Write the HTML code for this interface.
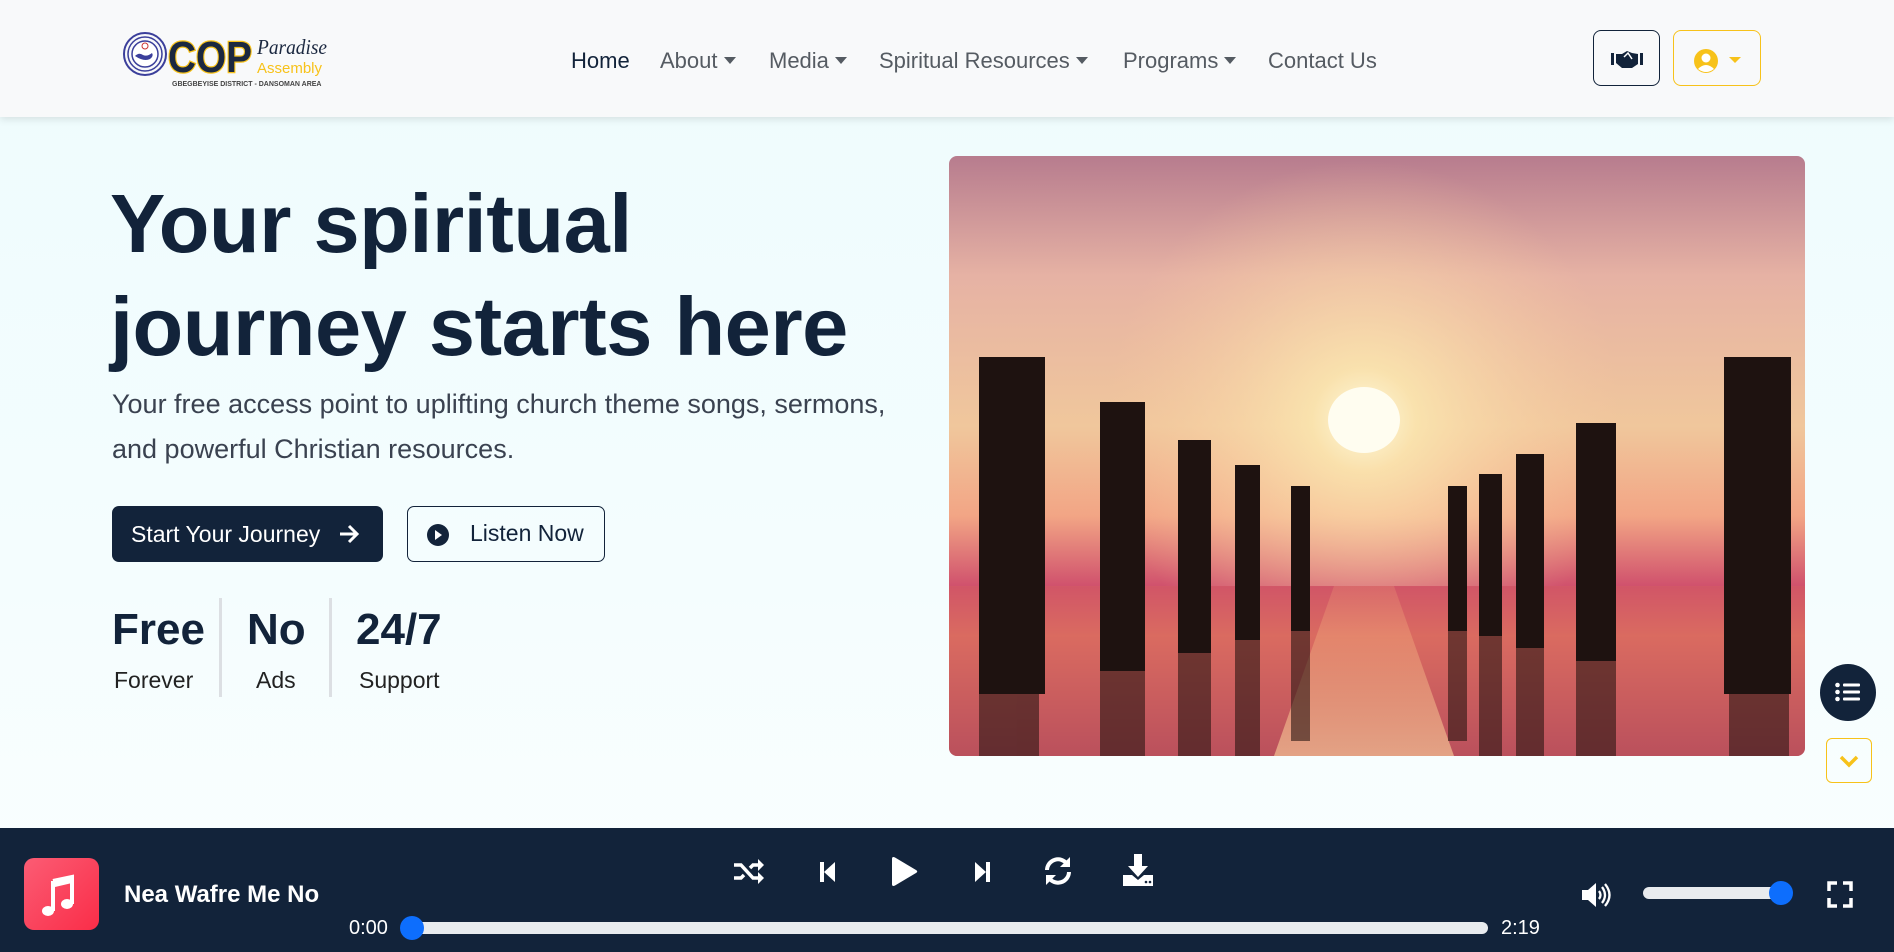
<!DOCTYPE html>
<html><head><meta charset="utf-8"><style>
*{margin:0;padding:0;box-sizing:border-box}
body{width:1894px;height:952px;overflow:hidden;font-family:"Liberation Sans",sans-serif;background:linear-gradient(180deg,#eefcfd 0%,#f4fdfe 60%,#fbfeff 100%);position:relative;color:#12233a}
.nav{position:absolute;left:0;top:0;width:1894px;height:117px;background:#f8f9fa;box-shadow:0 2px 8px rgba(0,0,0,.12);z-index:2}
.nav a{position:absolute;top:48px;font-size:22px;color:#555b62;text-decoration:none;white-space:nowrap}
.caret{display:inline-block;width:0;height:0;border-left:6px solid transparent;border-right:6px solid transparent;border-top:7px solid #555b62;vertical-align:4px;margin-left:6px}
.abs{position:absolute}
h1{position:absolute;left:110px;top:172px;font-size:83px;line-height:103px;font-weight:bold;color:#12233a;letter-spacing:-0.5px}
.lead{position:absolute;left:112px;top:382px;font-size:27px;line-height:45px;color:#3a4250;width:810px}
.btn1{position:absolute;left:112px;top:506px;width:271px;height:56px;background:#12233a;border-radius:7px;color:#fff;font-size:23px;line-height:56px;padding-left:19px}
.btn2{position:absolute;left:407px;top:506px;width:198px;height:56px;border:1.5px solid #12233a;border-radius:7px;color:#12233a;font-size:23px;line-height:53px;padding-left:62px}
.stat b{position:absolute;top:605px;font-size:44px;font-weight:bold;color:#12233a}
.stat span{position:absolute;top:667px;font-size:23px;color:#222}
.div{position:absolute;top:598px;width:3px;height:99px;background:#dcdfe3}
.player{position:absolute;left:0;top:828px;width:1894px;height:124px;background:#12233a}
.w{color:#fff}
</style></head><body>
<div class="nav">
  <svg class="abs" style="left:123px;top:30px" width="220" height="60" viewBox="0 0 220 60">
    <circle cx="22" cy="24" r="21" fill="none" stroke="#3b3f9b" stroke-width="2"/>
    <circle cx="22" cy="24" r="17" fill="none" stroke="#3b3f9b" stroke-width="1.5"/>
    <circle cx="22" cy="24" r="13" fill="#fff" stroke="#3b3f9b" stroke-width="1.5"/>
    <path d="M12 26 q4-4 8 -1 q4 2 9-2 q2 3 -2 6 q-6 3-15-3z" fill="#3b3f9b"/>
    <circle cx="22" cy="16" r="3" fill="none" stroke="#c33" stroke-width="1"/>
    <text x="45" y="42" font-family="Liberation Sans" font-weight="bold" font-size="44" fill="#1b2840" stroke="#f7c21a" stroke-width="2.5" paint-order="stroke" textLength="84" lengthAdjust="spacingAndGlyphs">COP</text>
    <text x="134" y="24" font-family="Liberation Serif" font-style="italic" font-size="21" fill="#1b2840" textLength="70" lengthAdjust="spacingAndGlyphs">Paradise</text>
    <text x="134" y="43" font-family="Liberation Sans" font-size="15" fill="#f7c21a">Assembly</text>
    <text x="49" y="56" font-family="Liberation Sans" font-weight="bold" font-size="7" fill="#444">GBEGBEYISE DISTRICT - DANSOMAN AREA</text>
  </svg>
  <a style="left:571px;color:#12233a">Home</a>
  <a style="left:660px">About<i class="caret"></i></a>
  <a style="left:769px">Media<i class="caret"></i></a>
  <a style="left:879px">Spiritual Resources<i class="caret"></i></a>
  <a style="left:1123px">Programs<i class="caret"></i></a>
  <a style="left:1268px">Contact Us</a>
  <div class="abs" style="left:1593px;top:30px;width:67px;height:56px;border:1.5px solid #12233a;border-radius:8px"></div>
  <svg class="abs" style="left:1611px;top:49px" width="32" height="20" viewBox="0 0 32 20"><rect x="0" y="4" width="3" height="12" fill="#12233a"/><rect x="29" y="4" width="3" height="12" fill="#12233a"/><path d="M5 5h6l5-3 5 2 6 1v10l-6 4h-10l-6-5z" fill="#12233a"/><path d="M13 8l4-4 4 6" stroke="#fff" stroke-width="1.5" fill="none"/></svg>
  <div class="abs" style="left:1673px;top:30px;width:88px;height:56px;border:1.5px solid #f7c21a;border-radius:8px"></div>
  <svg class="abs" style="left:1694px;top:48px" width="50" height="26" viewBox="0 0 50 26"><circle cx="12" cy="13" r="12" fill="#f7c21a"/><circle cx="12" cy="10" r="4.5" fill="#fff"/><path d="M4 21q8-8 16 0q-8 6-16 0z" fill="#fff"/><path d="M35 9h12l-6 6z" fill="#f7c21a"/></svg>
</div>

<h1>Your spiritual<br>journey starts here</h1>
<div class="lead">Your free access point to uplifting church theme songs, sermons, and powerful Christian resources.</div>
<div class="btn1">Start Your Journey<svg class="abs" style="left:226px;top:18px" width="22" height="20" viewBox="0 0 22 20"><path d="M2 10h17M11 2l8 8-8 8" stroke="#fff" stroke-width="3" fill="none"/></svg></div>
<div class="btn2"><svg class="abs" style="left:18px;top:16px" width="24" height="24" viewBox="0 0 24 24"><circle cx="12" cy="12" r="11" fill="#12233a"/><path d="M9 7l7 5-7 5z" fill="#fff"/></svg>Listen Now</div>
<div class="stat"><b style="left:112px">Free</b><span style="left:114px">Forever</span><b style="left:247px">No</b><span style="left:256px">Ads</span><b style="left:356px">24/7</b><span style="left:359px">Support</span></div>
<div class="div" style="left:219px"></div><div class="div" style="left:329px"></div>

<svg class="abs" style="left:949px;top:156px;border-radius:8px" width="856" height="600" viewBox="0 0 856 600" preserveAspectRatio="none">
  <defs>
    <linearGradient id="sky" x1="0" y1="0" x2="0" y2="1"><stop offset="0" stop-color="#b77c8e"/><stop offset=".2" stop-color="#e6b2a4"/><stop offset=".45" stop-color="#f0c79c"/><stop offset=".6" stop-color="#f2a585"/><stop offset=".72" stop-color="#cf4f6c"/><stop offset=".8" stop-color="#e0785f"/><stop offset="1" stop-color="#a14357"/></linearGradient>
    <radialGradient id="sun" cx="415" cy="264" r="260" gradientUnits="userSpaceOnUse"><stop offset="0" stop-color="#fffbe0"/><stop offset=".2" stop-color="#fbe7b0" stop-opacity=".85"/><stop offset="1" stop-color="#f8c8a0" stop-opacity="0"/></radialGradient>
    <linearGradient id="refl" x1="0" y1="0" x2="0" y2="1"><stop offset="0" stop-color="#f6b27a" stop-opacity=".2"/><stop offset="1" stop-color="#ffd9a0" stop-opacity=".6"/></linearGradient>
  </defs>
  <rect width="856" height="600" fill="url(#sky)"/>
  <rect width="856" height="430" fill="url(#sun)"/>
  <ellipse cx="415" cy="264" rx="36" ry="33" fill="#fffdf0"/>
  <rect x="0" y="430" width="856" height="170" fill="#d45e62" opacity=".5"/>
  <path d="M385 430h60l60 170h-180z" fill="url(#refl)"/>
  <g fill="#1e1210">
    <rect x="30" y="201" width="66" height="337"/>
    <rect x="151" y="246" width="45" height="269"/>
    <rect x="229" y="284" width="33" height="213"/>
    <rect x="286" y="309" width="25" height="175"/>
    <rect x="342" y="330" width="19" height="145"/>
    <rect x="499" y="330" width="19" height="145"/>
    <rect x="530" y="318" width="23" height="162"/>
    <rect x="567" y="298" width="28" height="194"/>
    <rect x="627" y="267" width="40" height="238"/>
    <rect x="775" y="201" width="67" height="337"/>
  </g>
  <g fill="#2a1512" opacity=".6">
    <rect x="30" y="538" width="60" height="62"/><rect x="151" y="515" width="45" height="85"/><rect x="229" y="497" width="33" height="103"/><rect x="286" y="484" width="25" height="116"/><rect x="342" y="475" width="19" height="110"/><rect x="499" y="475" width="19" height="110"/><rect x="530" y="480" width="23" height="120"/><rect x="567" y="492" width="28" height="108"/><rect x="627" y="505" width="40" height="95"/><rect x="780" y="538" width="60" height="62"/>
  </g>
</svg>

<div class="abs" style="left:1820px;top:664px;width:56px;height:57px;border-radius:50%;background:#12233a"></div>
<svg class="abs" style="left:1835px;top:682px" width="26" height="20" viewBox="0 0 26 20"><g fill="#fff"><circle cx="2.5" cy="3" r="2.3"/><circle cx="2.5" cy="10" r="2.3"/><circle cx="2.5" cy="17" r="2.3"/><rect x="8" y="1.5" width="17" height="3" rx="1"/><rect x="8" y="8.5" width="17" height="3" rx="1"/><rect x="8" y="15.5" width="17" height="3" rx="1"/></g></svg>
<div class="abs" style="left:1826px;top:738px;width:46px;height:45px;border:1.5px solid #f7c21a;border-radius:6px"></div>
<svg class="abs" style="left:1839px;top:755px" width="20" height="14" viewBox="0 0 20 14"><path d="M2 2l8 8 8-8" stroke="#f7c21a" stroke-width="3.5" fill="none"/></svg>

<div class="player">
  <div class="abs" style="left:24px;top:30px;width:75px;height:72px;border-radius:10px;background:linear-gradient(135deg,#fb5c74,#fa2d48)"></div>
  <svg class="abs" style="left:40px;top:45px" width="44" height="44" viewBox="0 0 44 44"><path d="M13 8l19-4v27" stroke="#fff" stroke-width="4" fill="none"/><path d="M13 8v30" stroke="#fff" stroke-width="4"/><path d="M15 8l17-4v6l-17 4z" fill="#fff"/><ellipse cx="8" cy="38" rx="6" ry="5" fill="#fff"/><ellipse cx="27" cy="31" rx="6" ry="5" fill="#fff"/></svg>
  <div class="abs w" style="left:124px;top:53px;font-size:24px;font-weight:bold">Nea Wafre Me No</div>
  <svg class="abs" style="left:733px;top:30px" width="32" height="26" viewBox="0 0 32 26"><path d="M1 7h7l12 13h6M1 20h7l3-3M17 10l3-3h6" stroke="#fff" stroke-width="3.5" fill="none"/><path d="M25 1l6 6-6 6zM25 14l6 6-6 6z" fill="#fff"/></svg>
  <svg class="abs" style="left:819px;top:33px" width="18" height="22" viewBox="0 0 18 22"><rect x="1" y="1" width="4" height="20" fill="#fff"/><path d="M16 1v20L5 11z" fill="#fff"/></svg>
  <svg class="abs" style="left:890px;top:28px" width="28" height="32" viewBox="0 0 28 32"><path d="M2 3q0-3 3-1.5l21 12.5q2.5 1.5 0 3l-21 12.5q-3 1.5-3-1.5z" fill="#fff"/></svg>
  <svg class="abs" style="left:973px;top:33px" width="18" height="22" viewBox="0 0 18 22"><rect x="13" y="1" width="4" height="20" fill="#fff"/><path d="M2 1v20l11-10z" fill="#fff"/></svg>
  <svg class="abs" style="left:1043px;top:27px" width="30" height="32" viewBox="0 0 30 32"><path d="M4 15a11 11 0 0 1 20-6M26 17a11 11 0 0 1-20 6" stroke="#fff" stroke-width="4" fill="none"/><path d="M27 2v10h-10zM3 30v-10h10z" fill="#fff"/></svg>
  <svg class="abs" style="left:1122px;top:25px" width="32" height="34" viewBox="0 0 32 34"><path d="M12 1h8v12h6l-10 11-10-11h6z" fill="#fff"/><path d="M1 22h9l6 5 6-5h9v11h-30z" fill="#fff"/><circle cx="24" cy="29" r="1.3" fill="#12233a"/><circle cx="28" cy="29" r="1.3" fill="#12233a"/></svg>
  <div class="abs w" style="left:349px;top:89px;font-size:20px">0:00</div>
  <div class="abs" style="left:407px;top:94px;width:1081px;height:12px;border-radius:6px;background:#e8ebee"></div>
  <div class="abs" style="left:400px;top:88px;width:24px;height:24px;border-radius:50%;background:#0d6efd"></div>
  <div class="abs w" style="left:1501px;top:89px;font-size:20px">2:19</div>
  <svg class="abs" style="left:1581px;top:54px" width="30" height="26" viewBox="0 0 30 26"><path d="M1 8h6l8-7v24l-8-7h-6z" fill="#fff"/><path d="M18 9q3 4 0 8M21 5q6 8 0 16M24 2q9 11 0 22" stroke="#fff" stroke-width="2.3" fill="none"/></svg>
  <div class="abs" style="left:1643px;top:59px;width:140px;height:12px;border-radius:6px;background:#e8ebee"></div>
  <div class="abs" style="left:1769px;top:53px;width:24px;height:24px;border-radius:50%;background:#0d6efd"></div>
  <svg class="abs" style="left:1827px;top:53px" width="26" height="27" viewBox="0 0 26 27"><path d="M2 10V2h8M16 2h8v8M24 17v8h-8M10 25H2v-8" stroke="#fff" stroke-width="3.5" fill="none"/></svg>
</div>
</body></html>
